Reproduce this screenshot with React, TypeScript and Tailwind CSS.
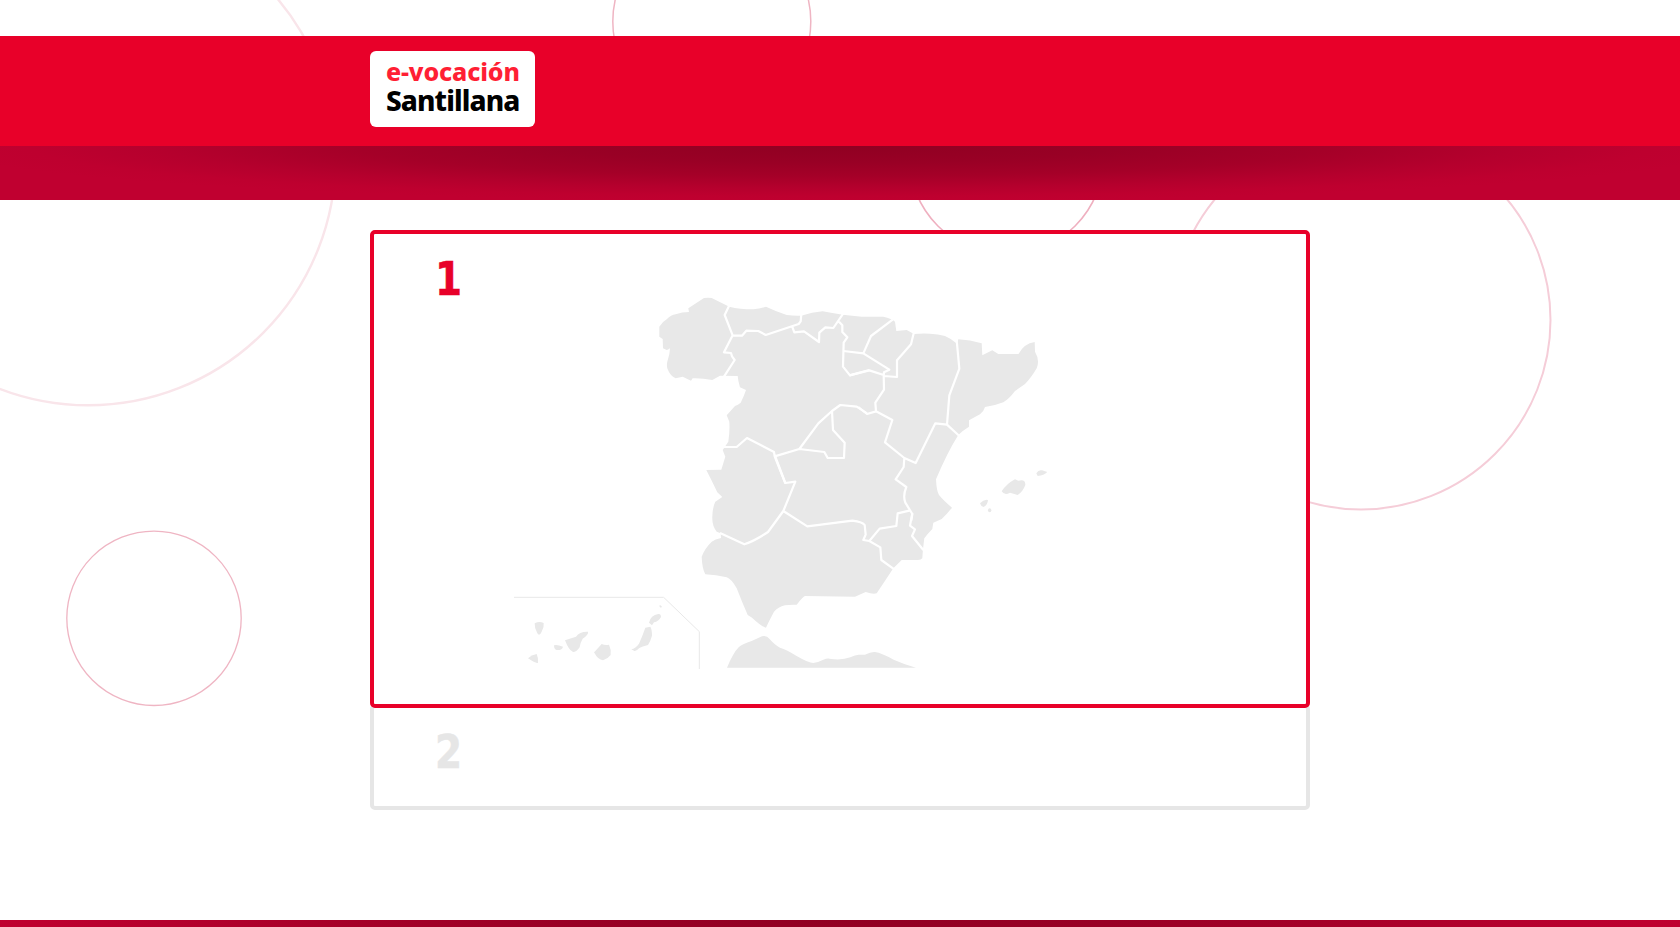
const bandShade =
  "bg-[#c00030] bg-[radial-gradient(ellipse_900px_56px_at_50%_0,#900022_0%,#990025_30%,#a50028_54%,#b5002d_75%,#be002f_90%,#c00030_100%)]";

function Backdrop() {
  return (
    <svg className="absolute inset-0" width="1680" height="927" viewBox="0 0 1680 927" fill="none" aria-hidden="true">
      <circle cx="88.3" cy="158" r="247.3" stroke="#f9e5ea" strokeWidth="2.4" />
      <circle cx="711.8" cy="21.5" r="99" stroke="#efb5c3" strokeWidth="1.5" />
      <circle cx="1006.5" cy="157.4" r="97" stroke="#efb0c0" strokeWidth="1.6" />
      <circle cx="1361" cy="320" r="189.5" stroke="#f5cdd8" strokeWidth="2" />
      <circle cx="154" cy="618.3" r="87.2" stroke="#efb5c3" strokeWidth="1.3" />
    </svg>
  );
}

function Logo() {
  return (
    <div className="mt-[15px] flex h-[76px] w-[165px] flex-col items-start rounded-md bg-white pl-[16px] pt-[6px] font-['Noto_Sans',sans-serif] leading-none">
      <span className="block h-[28px] whitespace-nowrap text-[25px] font-extrabold leading-[29px] tracking-[-0.15px] text-[#ff1f34]">e-vocación</span>
      <span className="block h-[30px] whitespace-nowrap text-[28px] font-extrabold leading-[30px] tracking-[-0.9px] text-black">Santillana</span>
    </div>
  );
}

function SpainMap() {
  return (
    <svg className="ml-[126px] mt-[46px] shrink-0" width="560" height="400" viewBox="500 280 560 400" fill="#e8e8e8" role="img">
      <path d="M659.3 326.7Q662 322 666.7 319.3Q671 315 675.7 314.3Q682 312 689 312L688.3 308.3L704 298Q708 297.3 711.7 298L729.3 306.7Q740 309.3 753.3 309.3Q761 308.5 766 306.7Q775 311 786.7 315Q794 316 801.3 315.7Q812 312 822.7 311.3Q832 313 842.7 314.7L861.7 316.7H883.3Q892 318.5 895 321.7L896.3 331L906.7 330L914 334Q922 333.3 930 333.7Q938 334 945 336Q952 339 956.7 343.5L958.3 339.3Q970 340 981.7 343.3L982.3 355.3L992.3 350.3L998.3 354H1018.5Q1024 343.5 1034.7 342L1035 351.7Q1040 360 1036.7 368.3Q1031 378 1025 384Q1020 387.5 1015 391Q1009 399 1003.3 402.3Q994 406 985 407Q983.5 412 980 414.3L969 420.3V426.7Q962 431 958.3 435Q947 453 936 479.3Q936.5 491 939 495Q943 500 952 507.7Q947 514 941.7 519Q937 521 933.3 522.7L932.3 529Q927 534.5 924.3 538.3L923 549L922.3 558.3Q921 560 918 560H901.7L893.3 568.3Q885 581 876.7 593.3Q873 594.5 865.7 592Q860 594.5 855 596.7L805 596Q803 596.5 796.7 604.7Q789 604.5 785 605.3Q778 607 774 611.7Q768 623 766 627.7Q762 627 751.7 617.5L747.7 615Q742 602 736.7 588.3Q731 578.5 726.7 577.3Q716 574.8 705.3 574.3Q702 568 701.7 556.7Q705 548 711.7 541.7Q715 539 721 538L720.7 533.3L716.7 531.7Q712 526 712.3 517.3Q712.5 507 715.3 501.7L722.3 497L717.3 492.3Q712 481 706.3 470L721.3 469.7L725.3 456.7L722.7 450L728.3 441.7Q730 431 729.3 421.7L726.7 415.3L735 406Q738 405 740.7 402.7Q744 396 746 390L740 387.3Q738 381 737.7 376L720 375.7L712.3 380Q702 378 692.7 378.3L691 380.7L682.7 376.7L675.7 378.3Q670 376 667.3 368.3Q666.5 365 667.3 361.7Q670 354 670 348.3Q668 350 666.7 350L663 348.3L662.7 339L659.3 336.7Z" />
      <g stroke="#ffffff" strokeWidth="6.6" fill="none" strokeLinejoin="round" transform="translate(640 280) scale(.33333)">
        <path d="M268 76L254 105L278 166L252 217L273 219L276 229L284 240L252 290M278 166L306 167L319 152L355 153L377 165L476 132L482 124L484 102M456 138L463 157L492 154L537 186L538 158L556 142L580 144L610 100M597 125L607 136V156L622 172L611 188L609 260L630 286L688 270" />
        <path d="M245 501H290L321 474L402 516L404 529L478 507L535 430L576 393L601 375L650 380L681 400M576 393L579 450L614 488L612 534H563L553 516L478 507M404 529L436 610" />
      </g>
      <g stroke="#ffffff" strokeWidth="6.6" fill="none" strokeLinejoin="round" transform="translate(840 300) scale(.33333)">
        <path d="M10 153L70 160L93 108L158 59M70 160L148 209L132 217L131 228L171 231V181L213 133L222 96M28 226L88 211L131 225L132 269L106 308L108 334L81 342L55 321M108 334L157 360L135 427L193 474L227 489L286 370L321 374L328 286L358 206L350 120M321 374L358 408M193 474L191 501L167 538L199 561Q188 587 196 608L217 642L214 662" />
      </g>
      <g stroke="#ffffff" strokeWidth="6.6" fill="none" strokeLinejoin="round" transform="translate(680 430) scale(.33333)">
        <path d="M284 75L316 159L346 155L310 243L382 289L517 272Q548 276 554 285L557 314L550 330L568 333L601 352L604 390L643 418M310 243L264 306Q225 332 193 343L120 309M568 333L599 296L649 288L653 250L691 241M697 249L690 287L705 298L696 318L730 360" />
      </g>
      <g transform="translate(840 300) scale(.33333)">
        <path d="M485 574Q500 551 525 538L535 542Q557 536 556 555Q548 576 533 585L510 578Q494 588 485 574Z" />
        <path d="M589 520Q596 508 606 511L622 516Q612 526 593 528Z" />
        <path d="M420 610Q432 597 444 600Q443 615 431 621Q422 619 420 610Z" />
        <ellipse cx="449" cy="631" rx="5" ry="6" />
      </g>
      <path transform="translate(680 430) scale(.33333)" d="M141 713Q160 668 176 652Q188 641 215 633L246 619Q261 616 268 626Q285 645 300 653Q320 659 350 678Q386 699 400 699Q412 698 430 689Q443 684 453 687Q488 691 511 682Q526 674 536 674L555 674Q572 665 585 666Q605 669 641 689Q675 704 708 713Z" />
      <g transform="translate(500 580) scale(.33333)">
        <path d="M42 52H491L598 155V267" fill="none" stroke="#e8e8e8" strokeWidth="3" />
        <path d="M104 130Q118 123 131 129Q133 142 125 155Q118 171 112 160Q103 145 104 130Z" />
        <path d="M84 235Q94 225 110 222Q116 235 114 248Q109 252 84 235Z" />
        <path d="M162 196Q171 193 189 200Q187 211 170 210Q162 209 162 196Z" />
        <path d="M195 181L228 170Q239 154 264 155Q267 163 248 176Q241 187 239 202Q227 219 218 215Q207 212 195 181Z" />
        <path d="M282 217Q289 210 305 192Q316 197 327 194Q334 208 332 225Q323 237 309 241Q294 240 282 217Z" />
        <path d="M394 208Q407 205 417 191Q427 169 436 143L451 140Q456 147 456 167Q451 185 444 195Q426 199 418 204Q408 215 402 212Z" />
        <path d="M447 128Q452 105 475 102Q483 101 483 111Q476 124 462 127L456 136Z" />
        <path d="M477 77L482 76L486 81L482 83Z" />
      </g>
    </svg>
  );
}

const stepNumber =
  "w-[62px] shrink-0 origin-left scale-x-[.94] font-['DejaVu_Sans_Condensed','DejaVu_Sans',sans-serif] text-[46px] font-bold leading-[56px] [-webkit-text-stroke:0.5px_currentColor]";

export default function App() {
  return (
    <div className="relative flex h-[927px] w-full flex-col overflow-hidden bg-white pt-9">
      <Backdrop />
      <header className="relative shrink-0">
        <div className="h-[110px] bg-[#e80029]">
          <div className="mx-auto flow-root w-[940px]">
            <Logo />
          </div>
        </div>
        <div className={`h-[54px] ${bandShade}`} />
      </header>
      <main className="relative mx-auto mt-[30px] w-[940px] grow">
        <section className="relative z-10 flex h-[478px] items-start rounded-[5px] border-4 border-[#e80029] bg-white">
          <h2 className={`-mr-[123px] ml-[61px] mt-[17px] text-[#e80029] ${stepNumber}`}>1</h2>
          <SpainMap />
        </section>
        <section className="-mt-1 flex h-[106px] items-start rounded-[5px] border-4 border-[#e6e6e6] bg-white">
          <h2 className={`ml-[61px] mt-[16px] text-[#e6e6e6] ${stepNumber}`}>2</h2>
        </section>
      </main>
      <footer className={`relative h-[7px] shrink-0 ${bandShade}`} />
    </div>
  );
}
